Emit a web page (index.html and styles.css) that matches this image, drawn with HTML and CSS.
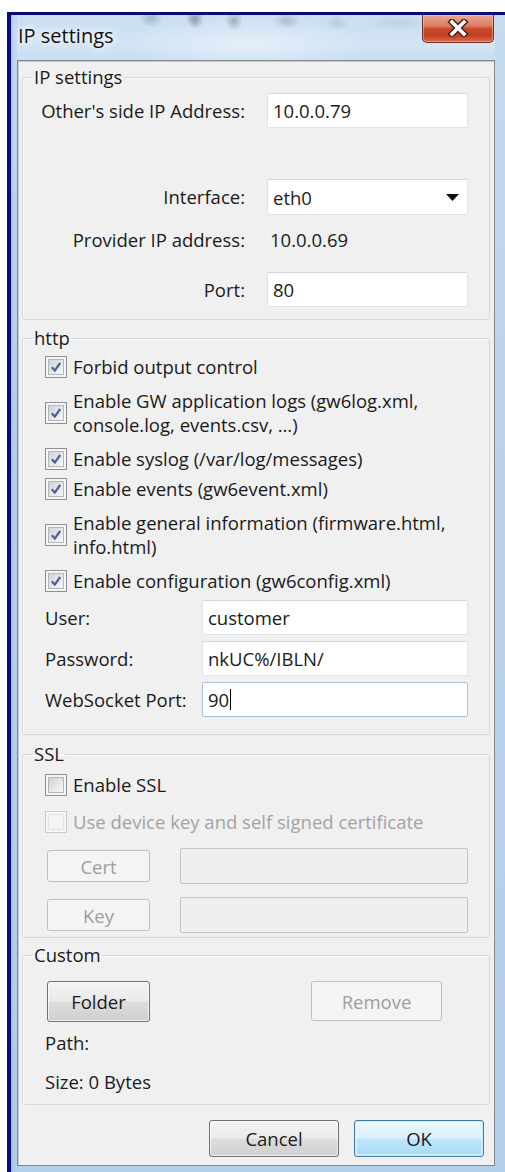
FILE: index.html
```html
<!DOCTYPE html>
<html lang="en">
<head>
<meta charset="utf-8">
<title>IP settings</title>
<link rel="stylesheet" href="styles.css">
</head>
<body>
<div class="window">
  <div class="titlebar">
    <span class="caption">IP settings</span>
    <div class="close-btn" aria-label="Close">
      <svg width="22" height="18" viewBox="0 0 22 18">
        <path d="M5 3 L17 15 M17 3 L5 15" stroke="#4a2018" stroke-width="6.5" stroke-linecap="square" fill="none"/>
        <path d="M5 3 L17 15 M17 3 L5 15" stroke="#ffffff" stroke-width="3.6" stroke-linecap="square" fill="none"/>
      </svg>
    </div>
  </div>

  <div class="client">
    <fieldset class="group group-ip">
      <legend>IP settings</legend>
      <div class="ip-form">
        <span class="lbl">Other's side IP Address:</span>
        <div class="field">10.0.0.79</div>
        <div class="blank-row"></div>
        <span class="lbl">Interface:</span>
        <div class="field combo">
          <span>eth0</span>
          <svg class="arrow" width="13" height="7" viewBox="0 0 13 7"><path d="M0 0 H13 L6.5 7 Z" fill="#111"/></svg>
        </div>
        <span class="lbl lbl-top">Provider IP address:</span>
        <span class="value lbl-top">10.0.0.69</span>
        <span class="lbl">Port:</span>
        <div class="field">80</div>
      </div>
    </fieldset>

    <fieldset class="group group-http">
      <legend>http</legend>
      <div class="http-body">
        <div class="check">
          <span class="box"><span class="inner"><svg viewBox="0 0 14 14"><path d="M2.8 7.2 L5.8 10.6 L11.2 3" fill="none" stroke="#4b6394" stroke-width="2.2"/></svg></span></span>
          <span class="txt">Forbid output control</span>
        </div>
        <div class="check two">
          <span class="box"><span class="inner"><svg viewBox="0 0 14 14"><path d="M2.8 7.2 L5.8 10.6 L11.2 3" fill="none" stroke="#4b6394" stroke-width="2.2"/></svg></span></span>
          <span class="txt">Enable GW application logs (gw6log.xml,<br>console.log, events.csv, …)</span>
        </div>
        <div class="check">
          <span class="box"><span class="inner"><svg viewBox="0 0 14 14"><path d="M2.8 7.2 L5.8 10.6 L11.2 3" fill="none" stroke="#4b6394" stroke-width="2.2"/></svg></span></span>
          <span class="txt">Enable syslog (/var/log/messages)</span>
        </div>
        <div class="check">
          <span class="box"><span class="inner"><svg viewBox="0 0 14 14"><path d="M2.8 7.2 L5.8 10.6 L11.2 3" fill="none" stroke="#4b6394" stroke-width="2.2"/></svg></span></span>
          <span class="txt">Enable events (gw6event.xml)</span>
        </div>
        <div class="check two">
          <span class="box"><span class="inner"><svg viewBox="0 0 14 14"><path d="M2.8 7.2 L5.8 10.6 L11.2 3" fill="none" stroke="#4b6394" stroke-width="2.2"/></svg></span></span>
          <span class="txt">Enable general information (firmware.html,<br>info.html)</span>
        </div>
        <div class="check">
          <span class="box"><span class="inner"><svg viewBox="0 0 14 14"><path d="M2.8 7.2 L5.8 10.6 L11.2 3" fill="none" stroke="#4b6394" stroke-width="2.2"/></svg></span></span>
          <span class="txt">Enable configuration (gw6config.xml)</span>
        </div>

        <div class="cred-form">
          <span class="lbl-left">User:</span>
          <div class="field">customer</div>
          <span class="lbl-left">Password:</span>
          <div class="field">nkUC%/IBLN/</div>
          <span class="lbl-left">WebSocket Port:</span>
          <div class="field focused">90<span class="caret"></span></div>
        </div>
      </div>
    </fieldset>

    <fieldset class="group group-ssl">
      <legend>SSL</legend>
      <div class="ssl-body">
        <div class="check">
          <span class="box"><span class="inner"></span></span>
          <span class="txt">Enable SSL</span>
        </div>
        <div class="check disabled">
          <span class="box"><span class="inner"></span></span>
          <span class="txt">Use device key and self signed certificate</span>
        </div>
        <div class="file-row">
          <div class="btn btn-disabled btn-small">Cert</div>
          <div class="field field-disabled"></div>
        </div>
        <div class="file-row">
          <div class="btn btn-disabled btn-small">Key</div>
          <div class="field field-disabled"></div>
        </div>
      </div>
    </fieldset>

    <fieldset class="group group-custom">
      <legend>Custom</legend>
      <div class="custom-body">
        <div class="custom-buttons">
          <div class="btn btn-folder">Folder</div>
          <div class="btn btn-disabled btn-remove">Remove</div>
        </div>
        <div class="info-line">Path:</div>
        <div class="info-line info-size">Size: 0 Bytes</div>
      </div>
    </fieldset>

    <div class="dialog-buttons">
      <div class="btn btn-dialog">Cancel</div>
      <div class="btn btn-dialog btn-default">OK</div>
    </div>
  </div>
</div>
</body>
</html>
```

FILE: styles.css
```css
html, body {
  margin: 0;
  padding: 0;
}

body {
  background: #ffffff;
  font-family: "Open Sans", "Noto Sans", "DejaVu Sans", sans-serif;
  font-size: 18.5px;
  color: #1a1a1a;
  overflow: hidden;
}

/* ---- window frame (Aero style) ---- */
.window {
  box-sizing: border-box;
  margin: 12px 0 0 7px;
  width: 498px;
  height: 1160px;
  border-top: 3px solid #0b0b80;
  border-left: 4px solid #0b0b80;
  padding: 0 10px 0 6px;
  background:
    linear-gradient(90deg, rgba(120,150,190,0.35) 0, rgba(200,220,240,0) 3px, rgba(160,190,225,0.25) 5px, rgba(200,220,240,0) 6px),
    linear-gradient(180deg, #c4dbf1 0%, #b8d2ec 40%, #b4cfea 100%);
}

.titlebar {
  height: 45px;
  display: flex;
  align-items: flex-start;
  background:
    radial-gradient(ellipse 12px 9px at 134px 3px, rgba(90,110,110,0.35), rgba(90,110,110,0)),
    radial-gradient(ellipse 9px 10px at 178px 4px, rgba(60,70,80,0.45), rgba(60,70,80,0)),
    radial-gradient(ellipse 9px 10px at 217px 6px, rgba(70,80,90,0.35), rgba(70,80,90,0)),
    radial-gradient(ellipse 14px 8px at 270px 6px, rgba(90,100,120,0.3), rgba(90,100,120,0)),
    radial-gradient(ellipse 12px 8px at 320px 8px, rgba(110,120,140,0.22), rgba(110,120,140,0)),
    radial-gradient(ellipse 30px 8px at 380px 8px, rgba(130,140,160,0.18), rgba(130,140,160,0)),
    radial-gradient(ellipse 120px 30px at 230px 30px, rgba(235,243,250,0.7), rgba(235,243,250,0)),
    linear-gradient(180deg, #c9def1 0%, #d3e4f4 60%, #c9def2 100%);
}

.caption {
  margin: 8px 0 0 1px;
  line-height: 26px;
  font-size: 20px;
  color: #111;
  text-shadow: 0 0 6px #ffffff, 0 0 10px rgba(255,255,255,0.9);
}

.close-btn {
  margin-left: auto;
  margin-right: 1px;
  width: 72px;
  height: 28px;
  box-sizing: border-box;
  border: 1px solid #6b3026;
  border-top: none;
  border-radius: 0 0 5px 5px;
  background: linear-gradient(180deg, #e9a894 0%, #dc7c62 40%, #c9462a 52%, #c3401f 75%, #d46b4b 100%);
  box-shadow: inset 0 0 0 1px rgba(255,210,195,0.45);
  display: flex;
  align-items: center;
  justify-content: center;
}

.close-btn svg {
  display: block;
  margin-top: -2px;
}

/* ---- client area ---- */
.client {
  box-sizing: border-box;
  height: 1106px;
  border: 1px solid #7f8994;
  background: #f0f0f0;
  padding: 5px 4px 0 4px;
  box-shadow: inset 1px 1px 0 #c6ccd3;
}

.group {
  margin: 0;
  padding: 0;
  min-inline-size: 0;
  border: 1px solid #d3d8dd;
  border-radius: 3px;
  box-shadow: inset 1px 1px 0 #fbfbfb;
}

.group legend {
  margin-left: 10px;
  padding: 0 1px;
  line-height: 22px;
}

.group-http { margin-top: 7px; }
.group-ssl { margin-top: 8px; }
.group-custom { margin-top: 6px; }

/* ---- text fields ---- */
.field {
  box-sizing: border-box;
  background: #ffffff;
  border: 1px solid #dfe3e8;
  border-top-color: #d2d7dd;
  border-radius: 2px;
  padding: 0 5px;
  display: flex;
  align-items: center;
  white-space: nowrap;
}

.field.focused {
  border-color: #a6c2df;
}

.caret {
  display: inline-block;
  width: 1px;
  height: 21px;
  background: #000;
  margin-left: 1px;
}

.field-disabled {
  background: #efefef;
  border-color: #c3c3c3;
}

.combo {
  justify-content: space-between;
  padding-right: 8px;
}

.combo .arrow { display: block; }

/* ---- IP settings ---- */
.ip-form {
  display: grid;
  grid-template-columns: 1fr 201px;
  grid-template-rows: 35px 51px 36px 57px 35px;
  column-gap: 22px;
  padding: 5px 21px 12px 8px;
}

.blank-row { grid-column: 1 / -1; }

.lbl {
  text-align: right;
  align-self: center;
  white-space: nowrap;
  line-height: 22px;
}

.lbl-top {
  align-self: start;
  margin-top: 14px;
  line-height: 22px;
}

.value { padding-left: 3px; }

/* ---- checkboxes ---- */
.check {
  display: flex;
  align-items: center;
  gap: 6px;
  line-height: 24px;
  white-space: nowrap;
}

.check.two { padding: 4px 0; }

.box {
  box-sizing: border-box;
  flex: none;
  width: 22px;
  height: 22px;
  border: 1px solid #8e8f8f;
  padding: 2px;
  background: #f6f6f6;
}

.box .inner {
  box-sizing: border-box;
  display: block;
  width: 100%;
  height: 100%;
  border: 1px solid #b3b6ba;
  background: linear-gradient(135deg, #cfd2d6 0%, #e6e7e9 55%, #f7f7f7 100%);
}

.box svg {
  display: block;
  width: 100%;
  height: 100%;
}

.check.disabled { color: #a3a3a3; }
.check.disabled .box { border-color: #c9c9c9; }
.check.disabled .inner { border-color: #e1e1e1; background: #f4f4f4; }

/* ---- http ---- */
.http-body {
  display: flex;
  flex-direction: column;
  gap: 6px;
  padding: 6px 21px 17px 22px;
}

.cred-form {
  display: grid;
  grid-template-columns: 157px 1fr;
  grid-auto-rows: 35px;
  row-gap: 6px;
  margin-top: 1px;
}

.lbl-left {
  align-self: center;
  line-height: 22px;
  white-space: nowrap;
}

/* ---- SSL ---- */
.ssl-body {
  display: flex;
  flex-direction: column;
  padding: 8px 21px 4px 22px;
}

.ssl-body .check + .check { margin-top: 13px; }

.file-row {
  display: flex;
  align-items: center;
  height: 36px;
  gap: 30px;
  margin-top: 13px;
}

.ssl-body .check + .file-row { margin-top: 14px; }

.file-row .field {
  flex: 1;
  height: 36px;
}

/* ---- buttons ---- */
.btn {
  box-sizing: border-box;
  display: flex;
  align-items: center;
  justify-content: center;
  border: 1px solid #707070;
  border-radius: 3px;
  background: linear-gradient(180deg, #f2f2f2 0%, #ebebeb 48%, #dddddd 52%, #cfcfcf 100%);
  box-shadow: inset 0 0 0 1px rgba(255,255,255,0.7);
  color: #1b1b1b;
  white-space: nowrap;
}

.btn-disabled {
  border-color: #c0c0c0;
  background: #f4f4f4;
  box-shadow: none;
  color: #9d9d9d;
}

.btn-small {
  width: 103px;
  height: 32px;
  margin-left: 2px;
  flex: none;
}

/* ---- Custom ---- */
.custom-body {
  padding: 15px 21px 10px 22px;
}

.custom-buttons {
  display: flex;
  justify-content: space-between;
  padding: 0 26px 0 2px;
}

.btn-folder {
  width: 103px;
  height: 41px;
}

.btn-remove {
  width: 131px;
  height: 40px;
}

.info-line {
  line-height: 24px;
  margin-top: 9px;
}

.info-size { margin-top: 15px; }

/* ---- dialog buttons ---- */
.dialog-buttons {
  display: flex;
  justify-content: flex-end;
  gap: 15px;
  margin-top: 15px;
  padding-right: 6px;
}

.btn-dialog {
  width: 130px;
  height: 37px;
}

.btn-default {
  border-color: #3c7fb1;
  background: linear-gradient(180deg, #eaf6fd 0%, #d9f0fc 48%, #bee6fd 52%, #a7d9f5 100%);
  box-shadow: inset 0 0 0 1px #c4e7fb, inset 0 0 0 2px rgba(255,255,255,0.5);
}
```
